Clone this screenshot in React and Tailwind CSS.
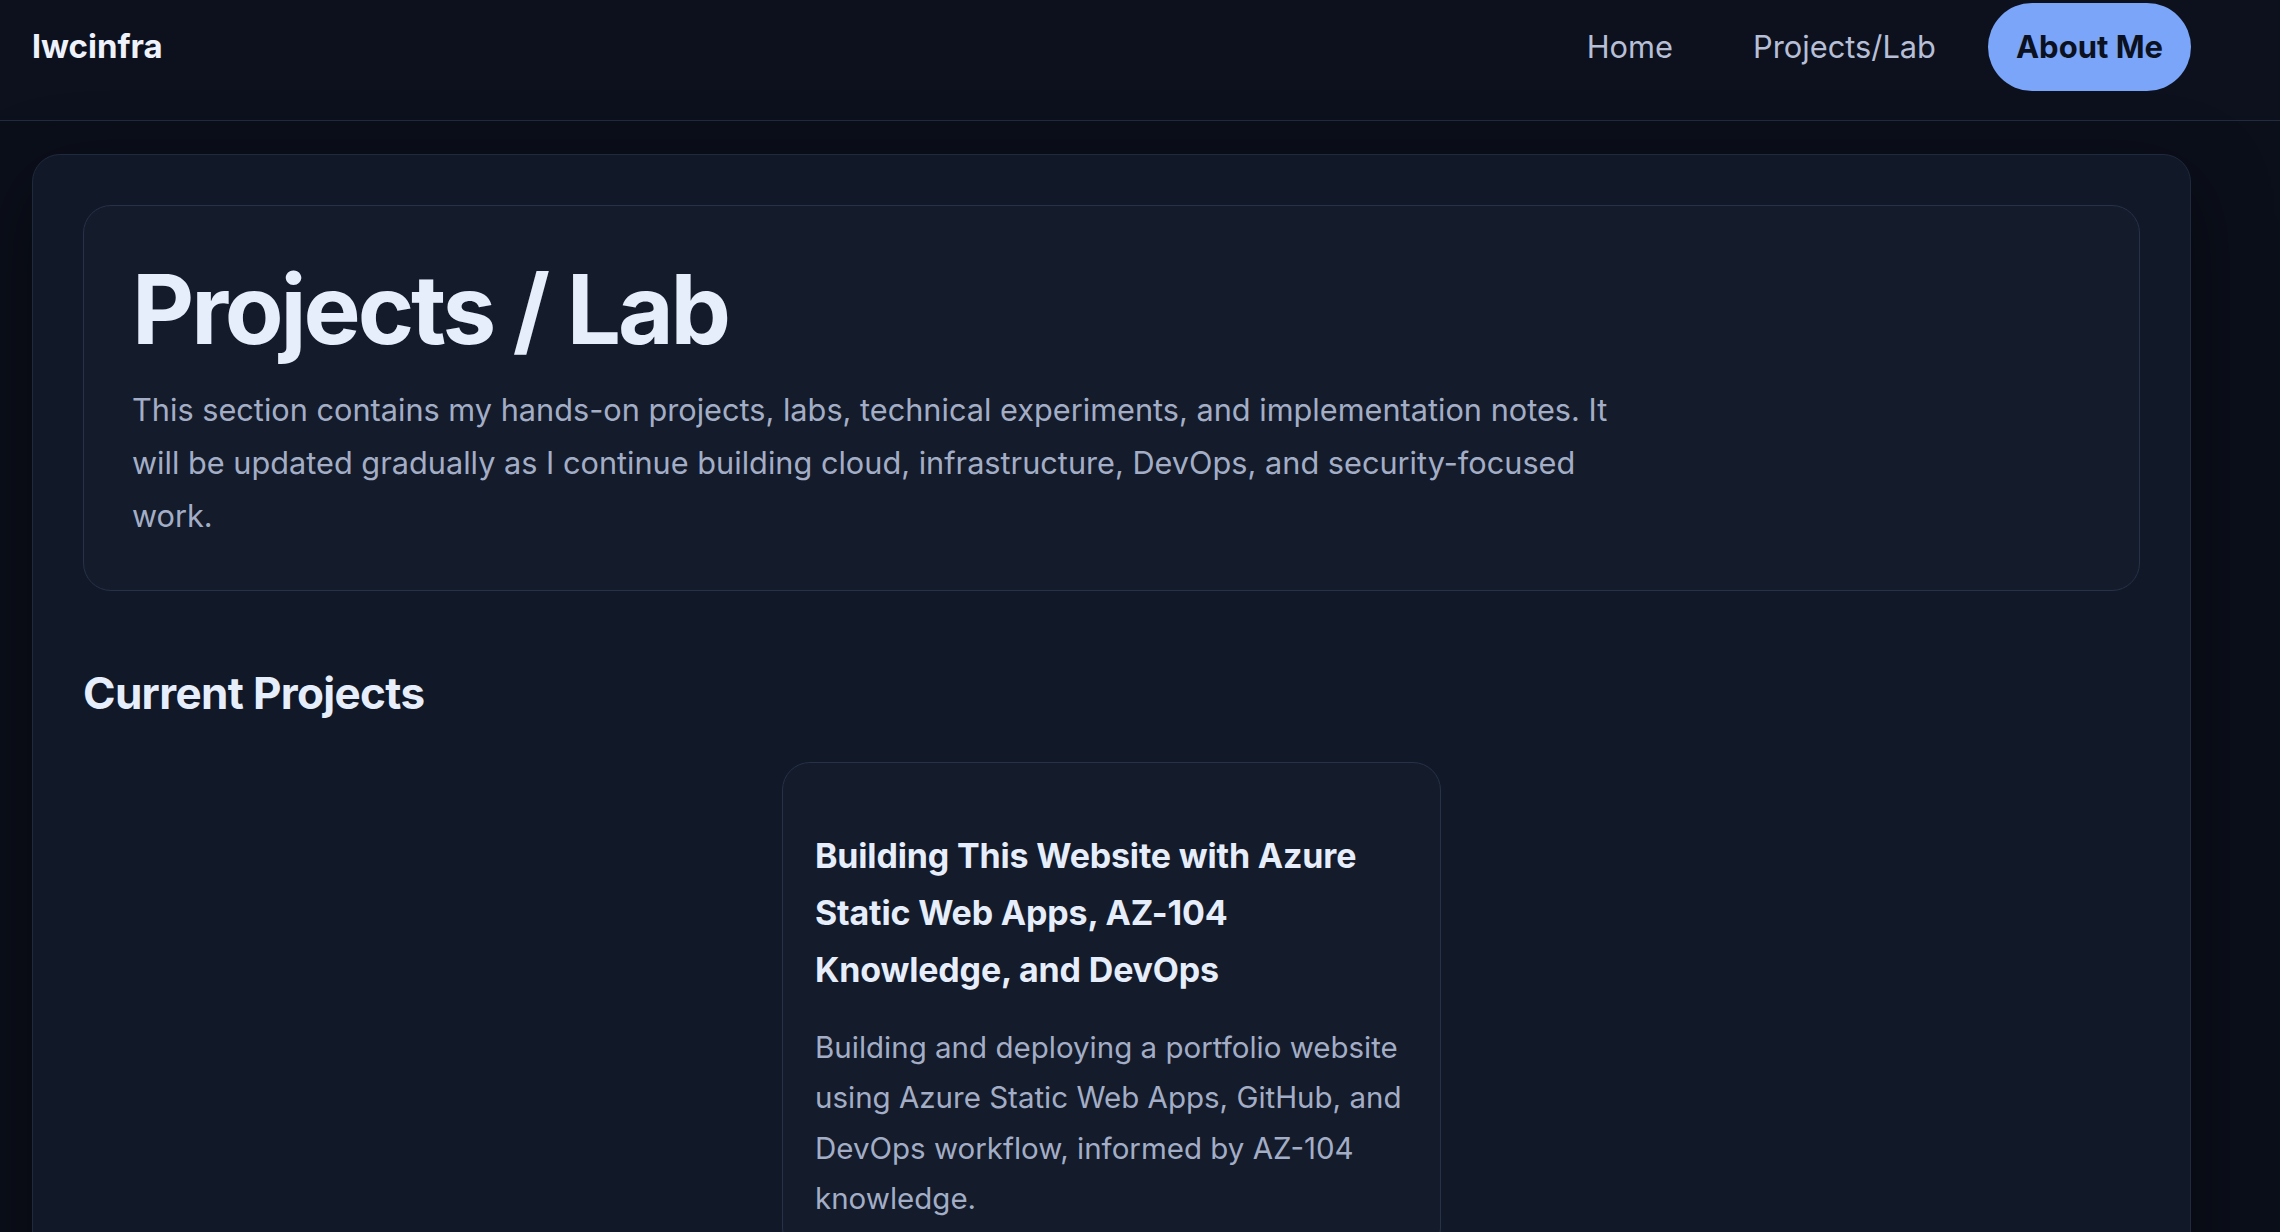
import React from "react";

export default function App() {
  return (
    <div className="min-h-screen bg-[#0b0f1a] font-['Inter','Noto_Sans',sans-serif] antialiased">
      <header className="h-[121px] border-b border-[#222b3f] bg-[#0d111e]">
        <div className="ml-[32px] flex w-[2159px] items-center justify-between pt-[3px]">
          <span className="text-[33px] font-bold text-[#eef2fd]">lwcinfra</span>
          <nav className="flex items-center gap-6">
            <a className="px-7 py-[21px] text-[30.8px] leading-[46px] text-[#b6bfd6]">Home</a>
            <a className="px-7 py-[21px] text-[30.8px] leading-[46px] text-[#b6bfd6]">Projects/Lab</a>
            <a className="rounded-full bg-[#7aa5f8] px-7 py-[21px] text-[31px] font-bold leading-[46px] text-[#0b1120]">
              About Me
            </a>
          </nav>
        </div>
      </header>

      <main className="ml-[32px] mt-[33px] w-[2159px]">
        <section className="rounded-[28px] border border-[#1f2a3e] bg-[#111827] p-[50px] shadow-[0_24px_80px_rgba(0,0,0,0.45)]">
          <div className="rounded-[28px] border border-[#263249] bg-[#141b2b] p-12">
            <h1 className="text-[96px] font-bold leading-[1.15] tracking-[-0.032em] text-[#e6edfb]">Projects / Lab</h1>
            <p className="mt-5 max-w-[1500px] text-[30.7px] leading-[52.6px] text-[#a3aec6]">
              This section contains my hands-on projects, labs, technical experiments, and implementation notes. It
              will be updated gradually as I continue building cloud, infrastructure, DevOps, and security-focused
              work.
            </p>
          </div>

          <h2 className="mt-[76px] text-[44px] font-bold leading-[1.2] tracking-[-0.015em] text-[#e6edfb]">
            Current Projects
          </h2>

          <div className="mt-[42px] flex justify-center">
            <article className="w-[659px] rounded-[28px] border border-[#263249] bg-[#141b2b] px-8 pb-8 pt-[64px]">
              <h3 className="text-[34px] font-bold leading-[57px] tracking-[-0.005em] text-[#e6edfb]">
                Building This Website with Azure Static Web Apps, AZ-104 Knowledge, and DevOps
              </h3>
              <p className="mt-[24px] text-[29.5px] leading-[50.3px] text-[#a3aec6]">
                Building and deploying a portfolio website using Azure Static Web Apps, GitHub, and DevOps workflow,
                informed by AZ-104 knowledge.
              </p>
            </article>
          </div>
        </section>
      </main>
    </div>
  );
}
